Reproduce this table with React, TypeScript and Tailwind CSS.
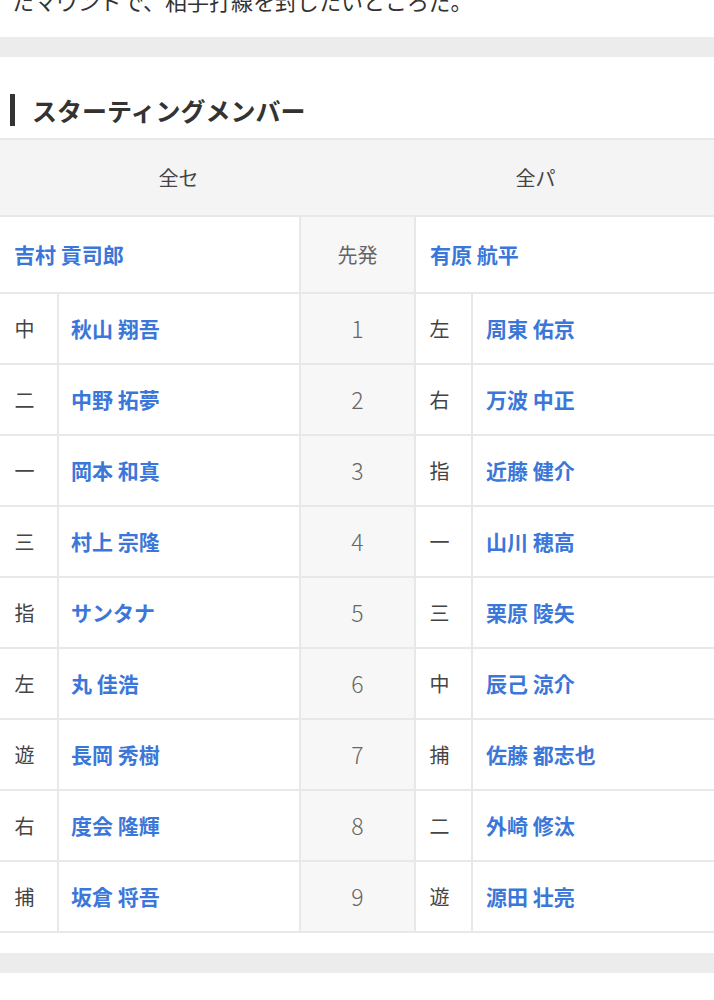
import React from "react";

type Row = { no: number; lpos: string; lname: string; rpos: string; rname: string };

const rows: Row[] = [
  { no: 1, lpos: "中", lname: "秋山 翔吾", rpos: "左", rname: "周東 佑京" },
  { no: 2, lpos: "二", lname: "中野 拓夢", rpos: "右", rname: "万波 中正" },
  { no: 3, lpos: "一", lname: "岡本 和真", rpos: "指", rname: "近藤 健介" },
  { no: 4, lpos: "三", lname: "村上 宗隆", rpos: "一", rname: "山川 穂高" },
  { no: 5, lpos: "指", lname: "サンタナ", rpos: "三", rname: "栗原 陵矢" },
  { no: 6, lpos: "左", lname: "丸 佳浩", rpos: "中", rname: "辰己 涼介" },
  { no: 7, lpos: "遊", lname: "長岡 秀樹", rpos: "捕", rname: "佐藤 都志也" },
  { no: 8, lpos: "右", lname: "度会 隆輝", rpos: "二", rname: "外崎 修汰" },
  { no: 9, lpos: "捕", lname: "坂倉 将吾", rpos: "遊", rname: "源田 壮亮" },
];

const font = { fontFamily: '"Noto Sans CJK JP", "Noto Sans", sans-serif' };

const App: React.FC = () => {
  return (
    <div className="w-[714px] bg-white text-[#333] overflow-hidden" style={font}>
      <div className="h-[37px] overflow-hidden">
        <p className="-mt-[16px] px-3 text-[22px] leading-[33px] text-[#333]">
          たマウンドで、相手打線を封じたいところだ。
        </p>
      </div>
      <div className="h-[20px] bg-[#ececec]" />

      {/* Starting members */}
      <div className="pt-[37px] pb-[12px] px-[10px] flex items-center gap-[17px]">
        <span className="w-[5px] h-[32px] bg-[#333]" />
        <h2 className="text-[25px] font-bold leading-[32px]">スターティングメンバー</h2>
      </div>

      <div className="border-t-2 border-[#e8e8e8] text-[20px]">
        <div className="grid grid-cols-2 h-[77px] bg-[#f4f4f4] border-b-2 border-[#e8e8e8] items-center text-center text-[#444]">
          <div>全セ</div>
          <div>全パ</div>
        </div>

        <div className="grid grid-cols-[57px_242px_115px_57px_1fr] h-[77px] border-b-2 border-[#e8e8e8]">
          <div className="col-span-2 flex items-center pl-[14px] text-[21px] font-bold text-[#3b77d9]">吉村 貢司郎</div>
          <div className="flex items-center justify-center bg-[#f7f7f7] border-l-2 border-[#e8e8e8] text-[#666]">先発</div>
          <div className="col-span-2 flex items-center pl-[14px] text-[21px] font-bold text-[#3b77d9] border-l-2 border-[#e8e8e8]">
            有原 航平
          </div>
        </div>

        {rows.map((r) => (
          <div
            key={r.no}
            className="grid grid-cols-[57px_242px_115px_57px_1fr] h-[71px] border-b-2 border-[#e8e8e8]"
          >
            <div className="flex items-center justify-center text-[#444] pr-[8px]">{r.lpos}</div>
            <div className="flex items-center pl-[12px] text-[21px] font-bold text-[#3b77d9] border-l-2 border-[#e8e8e8]">
              {r.lname}
            </div>
            <div className="flex items-center justify-center bg-[#f7f7f7] border-l-2 border-[#e8e8e8] text-[23px] text-[#666] font-light">
              {r.no}
            </div>
            <div className="flex items-center justify-center text-[#444] pr-[8px] border-l-2 border-[#e8e8e8]">
              {r.rpos}
            </div>
            <div className="flex items-center pl-[13px] text-[21px] font-bold text-[#3b77d9] border-l-2 border-[#e8e8e8]">
              {r.rname}
            </div>
          </div>
        ))}
      </div>

      <div className="h-[20px] mt-[20px] bg-[#ececec]" />
      <div className="h-[40px]" />
    </div>
  );
};

export default App;
